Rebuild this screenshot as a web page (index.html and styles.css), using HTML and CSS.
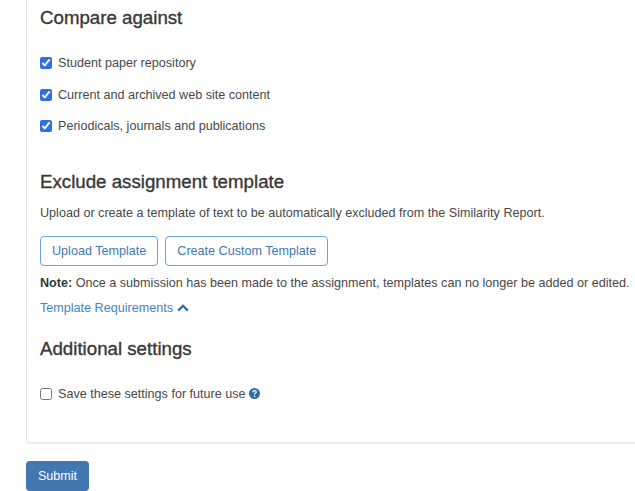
FILE: index.html
```html
<!DOCTYPE html>
<html lang="en">
<head>
  <meta charset="UTF-8">
  <title>Assignment settings</title>
  <link rel="stylesheet" href="styles.css">
</head>
<body>

  <div class="card">
    <h2 class="first">Compare against</h2>

    <ul class="checks">
      <li><label><input type="checkbox" checked> Student paper repository</label></li>
      <li><label><input type="checkbox" checked> Current and archived web site content</label></li>
      <li><label><input type="checkbox" checked> Periodicals, journals and publications</label></li>
    </ul>

    <h2 class="exclude">Exclude assignment template</h2>
    <p class="intro">Upload or create a template of text to be automatically excluded from the Similarity Report.</p>

    <div class="buttons">
      <button class="outline">Upload Template</button>
      <button class="outline">Create Custom Template</button>
    </div>

    <p class="note"><b>Note:</b> Once a submission has been made to the assignment, templates can no longer be added or edited.</p>

    <a class="req" href="#">Template Requirements
      <svg width="12" height="8" viewBox="0 0 12 8"><path d="M1.2 6.6 6 1.8l4.8 4.8" fill="none" stroke="#2f6aa8" stroke-width="2.2"/></svg>
    </a>

    <h2 class="additional">Additional settings</h2>

    <label class="save">
      <input type="checkbox">
      <span>Save these settings for future use
        <svg class="help" width="11" height="11" viewBox="0 0 11 11"><circle cx="5.5" cy="5.5" r="5.5" fill="#2f6aa8"/><path d="M3.8 4.2c0-1 .8-1.6 1.8-1.6s1.7.6 1.7 1.5c0 1.3-1.7 1.2-1.7 2.4" fill="none" stroke="#fff" stroke-width="1.2"/><circle cx="5.6" cy="8.2" r=".8" fill="#fff"/></svg>
      </span>
    </label>
  </div>

  <button class="submit">Submit</button>

</body>
</html>
```

FILE: styles.css
```css
html, body {
  margin: 0;
  padding: 0;
  height: 491px;
  overflow: hidden;
  background: #fff;
  color: #484848;
  font-family: "Liberation Sans", Arial, sans-serif;
  font-size: 12.6px;
}

.card {
  box-sizing: border-box;
  height: 444px;
  margin-left: 26px;
  padding: 0 0 0 13px;
  border-left: 1px solid #e3e3e3;
  border-bottom: 2px solid #ebebeb;
  border-radius: 0 0 0 4px;
}

h2 {
  margin: 0;
  font-size: 18.7px;
  line-height: 20px;
  font-weight: normal;
  color: #383838;
  -webkit-text-stroke: 0.35px #383838;
}

h2.first {
  padding-top: 8px;
}

.checks {
  list-style: none;
  margin: 25px 0 0;
  padding: 0;
}

.checks li {
  height: 31.5px;
  line-height: 20px;
}

label {
  display: flex;
  align-items: center;
  gap: 6px;
  height: 20px;
}

input[type="checkbox"] {
  width: 12px;
  height: 12px;
  margin: 0;
  accent-color: #2f6fe0;
}

.help {
  vertical-align: -1px;
}

.exclude {
  margin-top: 24px;
}

.intro {
  margin: 11px 0 0;
  line-height: 20px;
}

.buttons {
  display: flex;
  gap: 7px;
  margin-top: 13px;
}

.outline {
  height: 30px;
  padding: 0 11px;
  border: 1px solid #6ea3dd;
  border-radius: 4px;
  background: #fff;
  color: #3f78b5;
  font: inherit;
}

.note {
  margin: 7px 0 0;
  line-height: 20px;
  white-space: nowrap;
}

.note b {
  color: #383838;
}

.req {
  display: block;
  margin-top: 5px;
  line-height: 20px;
  color: #4a82bd;
  text-decoration: none;
}

.additional {
  margin-top: 21px;
}

.save {
  margin-top: 25px;
}

.submit {
  display: block;
  width: 63px;
  height: 30px;
  margin: 17px 0 0 26px;
  border: none;
  border-radius: 4px;
  background: #4277b0;
  color: #fff;
  font: inherit;
}
```
